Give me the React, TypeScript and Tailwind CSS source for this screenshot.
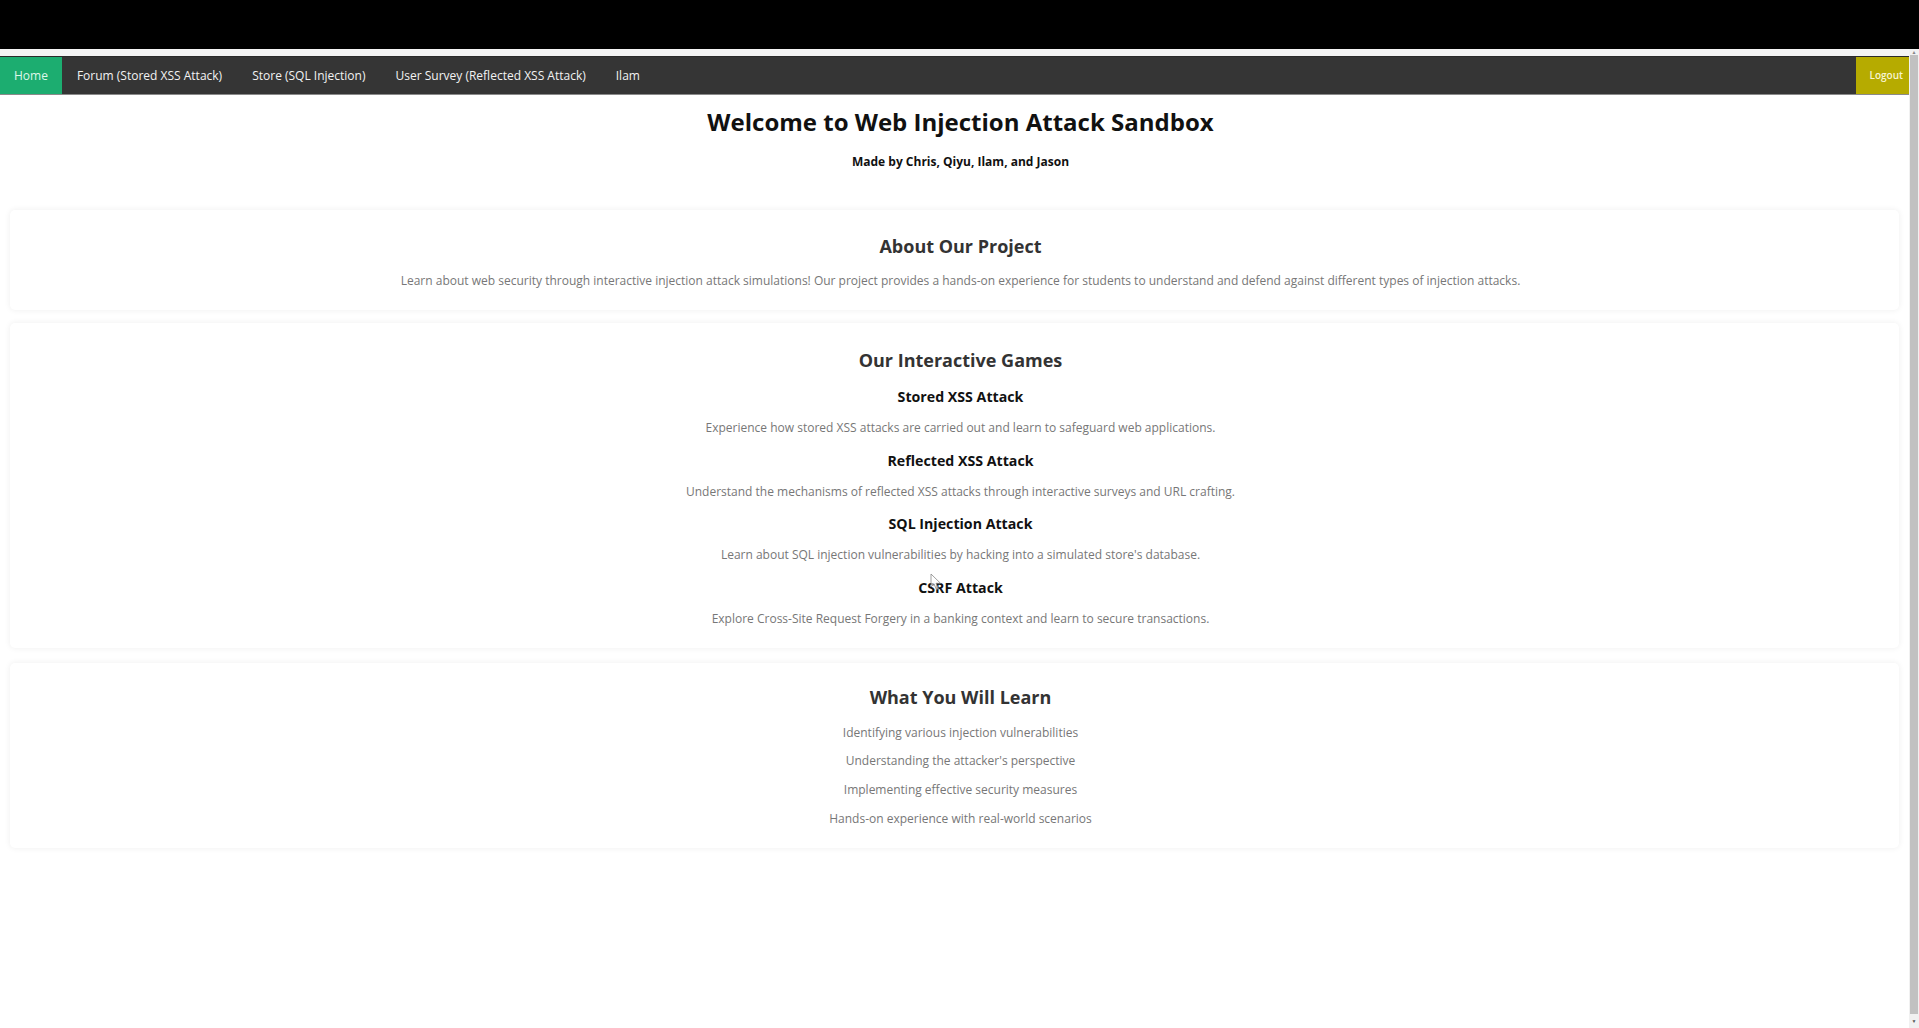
import React from "react";

const games = [
  {
    title: "Stored XSS Attack",
    desc: "Experience how stored XSS attacks are carried out and learn to safeguard web applications.",
  },
  {
    title: "Reflected XSS Attack",
    desc: "Understand the mechanisms of reflected XSS attacks through interactive surveys and URL crafting.",
  },
  {
    title: "SQL Injection Attack",
    desc: "Learn about SQL injection vulnerabilities by hacking into a simulated store's database.",
  },
  {
    title: "CSRF Attack",
    desc: "Explore Cross-Site Request Forgery in a banking context and learn to secure transactions.",
  },
];

const learn = [
  "Identifying various injection vulnerabilities",
  "Understanding the attacker's perspective",
  "Implementing effective security measures",
  "Hands-on experience with real-world scenarios",
];

const navItems = [
  "Forum (Stored XSS Attack)",
  "Store (SQL Injection)",
  "User Survey (Reflected XSS Attack)",
  "Ilam",
];

export default function App() {
  return (
    <div
      className="w-[1919px] h-[1028px] overflow-hidden bg-white flex flex-col"
      style={{ fontFamily: '"Open Sans", "Noto Sans", sans-serif' }}
    >
      <div className="h-[49px] bg-black shrink-0" />
      <div className="flex flex-1 min-h-0">
        <div className="flex-1 flex flex-col relative">
          <div className="h-[7px] bg-[#f4f4f4]" />
          <nav className="h-[39px] bg-[#353535] flex items-stretch border-b border-[#8a8a8a] border-t border-t-[#2a2a2a]">
            <a className="bg-[#1cad70] text-[#dff7ea] text-[12px] px-[14px] flex items-center">
              Home
            </a>
            {navItems.map((n) => (
              <a
                key={n}
                className="text-[#f2f2f2] text-[12px] px-[15px] flex items-center"
              >
                {n}
              </a>
            ))}
            <div className="flex-1" />
            <a className="bg-[#b6ab00] text-[#f7f4d0] text-[10px] font-semibold w-[53px] flex items-center justify-end pr-[6px]">
              Logout
            </a>
          </nav>

          <h1 className="mt-[11px] pl-[12px] text-center text-[24px] leading-[32px] font-bold text-[#111]">
            Welcome to Web Injection Attack Sandbox
          </h1>
          <p className="mt-[15px] pl-[12px] text-center text-[12px] leading-[18px] font-bold text-[#111]">
            Made by Chris, Qiyu, Ilam, and Jason
          </p>

          <section className="mx-[10px] mt-[39px] bg-white rounded-[5px] shadow-[0_0_6px_rgba(0,0,0,0.07)] pt-[24px] pb-[19px] pl-[12px] text-center">
            <h2 className="text-[18px] leading-[24px] font-bold text-[#333]">
              About Our Project
            </h2>
            <p className="mt-[13px] text-[12px] leading-[20px] text-[#777]">
              Learn about web security through interactive injection attack simulations! Our project provides a hands-on experience for students to understand and defend against different types of injection attacks.
            </p>
          </section>

          <section className="mx-[10px] mt-[13px] bg-white rounded-[5px] shadow-[0_0_6px_rgba(0,0,0,0.07)] pt-[25px] pb-[19px] pl-[12px] text-center">
            <h2 className="text-[18px] leading-[24px] font-bold text-[#333]">
              Our Interactive Games
            </h2>
            {games.map((g, i) => (
              <div key={g.title} className={i === 0 ? "mt-[15px]" : "mt-[12.5px]"}>
                <h3 className="text-[14.2px] leading-[20px] font-bold text-[#111]">
                  {g.title}
                </h3>
                <p className="mt-[11px] text-[12px] leading-[20px] text-[#777]">
                  {g.desc}
                </p>
              </div>
            ))}
          </section>

          <section className="mx-[10px] mt-[15px] bg-white rounded-[5px] shadow-[0_0_6px_rgba(0,0,0,0.07)] pt-[22px] pb-[15px] pl-[12px] text-center">
            <h2 className="text-[18px] leading-[24px] font-bold text-[#333]">
              What You Will Learn
            </h2>
            <ul className="mt-[10px]">
              {learn.map((l) => (
                <li key={l} className="text-[12px] leading-[28.67px] text-[#777]">
                  {l}
                </li>
              ))}
            </ul>
          </section>

          <svg
            className="absolute left-[930px] top-[524px]"
            width="12"
            height="18"
            viewBox="0 0 12 18"
          >
            <path
              d="M1 1 L1 14 L4 11 L6.5 16.5 L8.5 15.6 L6 10.3 L10.5 10.3 Z"
              fill="white"
              fillOpacity="0.6"
              stroke="#888"
              strokeWidth="0.8"
            />
          </svg>
        </div>
        <div className="w-[10px] bg-[#f1f1f1] flex flex-col items-stretch">
          <div className="h-[6px] flex items-center justify-center text-[5px] text-[#888] leading-none">▲</div>
          <div className="flex-1 mx-[1px] bg-[#c1c1c1]" />
          <div className="h-[14px] flex items-center justify-center text-[5px] text-[#555] leading-none">▼</div>
        </div>
      </div>
    </div>
  );
}
